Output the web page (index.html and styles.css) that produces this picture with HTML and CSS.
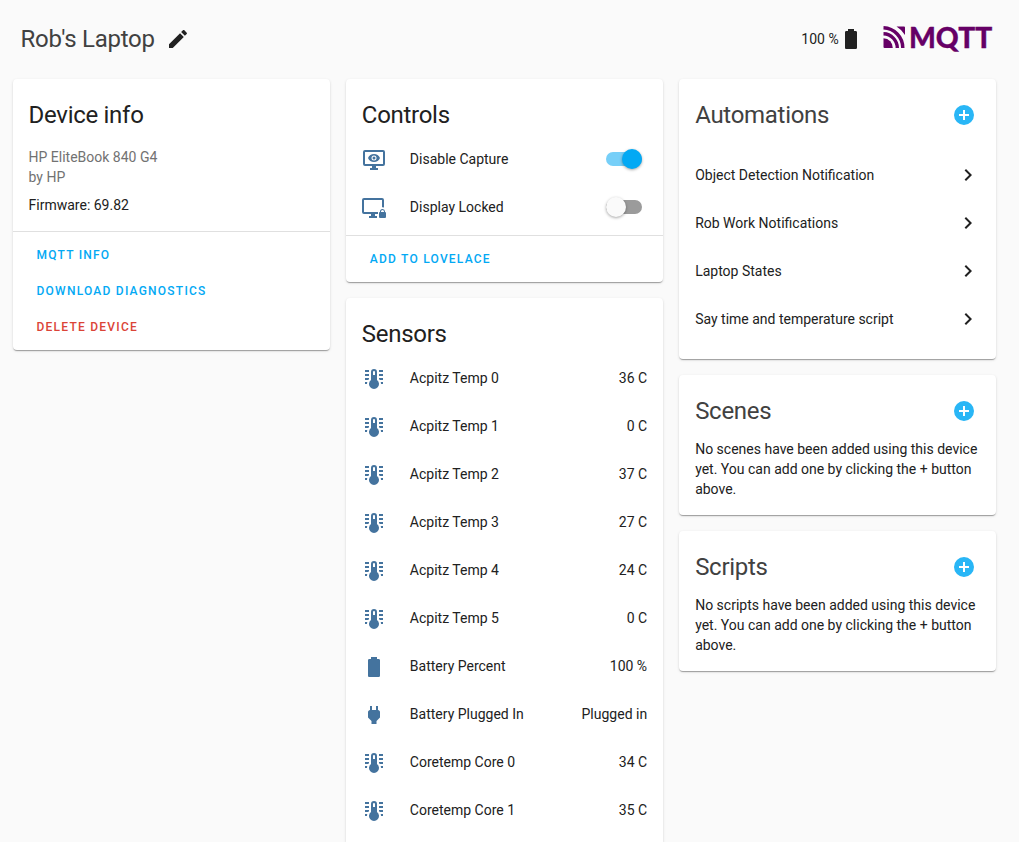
FILE: index.html
```
<!DOCTYPE html>
<html lang="en">
<head>
<meta charset="utf-8">
<title>Rob's Laptop</title>
<link rel="stylesheet" href="styles.css">
</head>
<body>
<svg class="defs" width="0" height="0">
  <symbol id="thermo" viewBox="0 0 24 24"><path d="M15 13V5A3 3 0 0 0 9 5V13A5 5 0 1 0 15 13M12 4A1 1 0 0 1 13 5V8H11V5A1 1 0 0 1 12 4ZM17 3H21V5H17ZM17 7H21V9H17ZM17 11H21V13H17.75L17 12.1ZM21 15V17H19C19 16.3 18.9 15.6 18.7 15ZM7 3V5H3V3ZM7 7V9H3V7ZM7 11V12.1L6.25 13H3V11ZM3 15V17H5C5 16.3 5.1 15.6 5.3 15Z"/></symbol>
  <symbol id="battery" viewBox="0 0 24 24"><path d="M16.67 4H15V2H9V4H7.33A1.33 1.33 0 0 0 6 5.33V20.67C6 21.4 6.6 22 7.33 22H16.67A1.33 1.33 0 0 0 18 20.67V5.33C18 4.6 17.4 4 16.67 4Z"/></symbol>
  <symbol id="plug" viewBox="0 0 24 24"><path d="M16 7V3H14V7H10V3H8V7C7 7 6 8 6 9V14.5L9.5 18V21H14.5V18L18 14.5V9C18 8 17 7 16 7Z"/></symbol>
  <symbol id="chevron" viewBox="0 0 24 24"><path d="M8.59 16.58L13.17 12L8.59 7.41L10 6L16 12L10 18Z"/></symbol>
  <symbol id="plus" viewBox="0 0 24 24"><path d="M17 13H13V17H11V13H7V11H11V7H13V11H17M12 2A10 10 0 1 0 12 22A10 10 0 0 0 12 2Z"/></symbol>
  <symbol id="monitor-eye" viewBox="0 0 24 24"><path fill-rule="evenodd" d="M3 2H21A2 2 0 0 1 23 4V16A2 2 0 0 1 21 18H14V20H16V22H8V20H10V18H3A2 2 0 0 1 1 16V4A2 2 0 0 1 3 2ZM3 4V16H21V4ZM12 6C14.7 6 17 7.6 18 10C17 12.4 14.7 14 12 14S7 12.4 6 10C7 7.6 9.300 6 12 6ZM12 7.500A2.500 2.500 0 1 0 12 12.500A2.500 2.500 0 0 0 12 7.500ZM12 8.500A1.500 1.500 0 1 1 12 11.500A1.500 1.500 0 0 1 12 8.500Z"/></symbol>
  <symbol id="monitor-lock" viewBox="0 0 24 24"><path fill-rule="evenodd" d="M2 2H20A2 2 0 0 1 22 4V11.500A4 4 0 0 0 20 11.200V4H2V16H16V18H13V20H15V22H7V20H9V18H2A2 2 0 0 1 0 16V4A2 2 0 0 1 2 2ZM18 16V15.500A2.500 2.500 0 0 1 23 15.500V16A1 1 0 0 1 24 17V21A1 1 0 0 1 23 22H18A1 1 0 0 1 17 21V17A1 1 0 0 1 18 16ZM19 16H22V15.500A1.500 1.500 0 0 0 19 15.500Z"/></symbol>
</svg>

<header class="header">
  <h1>Rob's Laptop</h1>
  <svg class="icon pencil" viewBox="0 0 24 24"><path d="M20.71 7.04C21.1 6.65 21.1 6 20.71 5.63L18.37 3.29C18 2.9 17.35 2.9 16.96 3.29L15.12 5.12L18.87 8.87M3 17.25V21H6.75L17.81 9.93L14.06 6.18L3 17.25Z"/></svg>
  <span class="charge">100 %</span>
  <svg class="icon"><use href="#battery"/></svg>
  <svg class="logo" viewBox="0 -7 116 44">
    <path d="M1.500 14.200A9.500 9.500 0 0 1 10.800 24H2.500Q1.500 24 1.500 23Z"/>
    <path class="arc" d="M1.500 9.800A14.200 14.200 0 0 1 15.300 24M1.500 3.800A20.200 20.200 0 0 1 20.800 24"/>
    <path d="M14.500 2.500H22Q23 2.500 23 3.500V11A25 25 0 0 0 14.500 2.500Z"/>
    <text x="27" y="23.700" textLength="83.300" lengthAdjust="spacingAndGlyphs">MQTT</text>
  </svg>
</header>

<main class="columns">
  <div class="column">
    <section class="card">
      <h2>Device info</h2>
      <div class="info">
        <div class="muted">HP EliteBook 840 G4</div>
        <div class="muted">by HP</div>
        <div class="firmware">Firmware: 69.82</div>
      </div>
      <div class="actions">
        <a>MQTT info</a>
        <a>Download diagnostics</a>
        <a class="danger">Delete device</a>
      </div>
    </section>
  </div>

  <div class="column">
    <section class="card">
      <h2>Controls</h2>
      <div class="entities">
        <div class="entity"><svg class="icon"><use href="#monitor-eye"/></svg><span class="name">Disable Capture</span><span class="switch on"></span></div>
        <div class="entity"><svg class="icon"><use href="#monitor-lock"/></svg><span class="name">Display Locked</span><span class="switch"></span></div>
      </div>
      <div class="actions"><a>Add to Lovelace</a></div>
    </section>
    <section class="card sensors">
      <h2>Sensors</h2>
      <div class="entities">
        <div class="entity"><svg class="icon"><use href="#thermo"/></svg><span class="name">Acpitz Temp 0</span><span>36 C</span></div>
        <div class="entity"><svg class="icon"><use href="#thermo"/></svg><span class="name">Acpitz Temp 1</span><span>0 C</span></div>
        <div class="entity"><svg class="icon"><use href="#thermo"/></svg><span class="name">Acpitz Temp 2</span><span>37 C</span></div>
        <div class="entity"><svg class="icon"><use href="#thermo"/></svg><span class="name">Acpitz Temp 3</span><span>27 C</span></div>
        <div class="entity"><svg class="icon"><use href="#thermo"/></svg><span class="name">Acpitz Temp 4</span><span>24 C</span></div>
        <div class="entity"><svg class="icon"><use href="#thermo"/></svg><span class="name">Acpitz Temp 5</span><span>0 C</span></div>
        <div class="entity"><svg class="icon"><use href="#battery"/></svg><span class="name">Battery Percent</span><span>100 %</span></div>
        <div class="entity"><svg class="icon"><use href="#plug"/></svg><span class="name">Battery Plugged In</span><span>Plugged in</span></div>
        <div class="entity"><svg class="icon"><use href="#thermo"/></svg><span class="name">Coretemp Core 0</span><span>34 C</span></div>
        <div class="entity"><svg class="icon"><use href="#thermo"/></svg><span class="name">Coretemp Core 1</span><span>35 C</span></div>
      </div>
    </section>
  </div>

  <div class="column related">
    <section class="card">
      <h2>Automations <svg class="icon add"><use href="#plus"/></svg></h2>
      <div class="links">
        <a>Object Detection Notification <svg class="icon"><use href="#chevron"/></svg></a>
        <a>Rob Work Notifications <svg class="icon"><use href="#chevron"/></svg></a>
        <a>Laptop States <svg class="icon"><use href="#chevron"/></svg></a>
        <a>Say time and temperature script <svg class="icon"><use href="#chevron"/></svg></a>
      </div>
    </section>
    <section class="card">
      <h2>Scenes <svg class="icon add"><use href="#plus"/></svg></h2>
      <p>No scenes have been added using this device yet. You can add one by clicking the + button above.</p>
    </section>
    <section class="card">
      <h2>Scripts <svg class="icon add"><use href="#plus"/></svg></h2>
      <p>No scripts have been added using this device yet. You can add one by clicking the + button above.</p>
    </section>
  </div>
</main>
</body>
</html>
```

FILE: styles.css
```
* { box-sizing: border-box; }
html, body { height: 100%; }
body {
  margin: 0;
  overflow: hidden;
  background: #fafafa;
  color: #212121;
  font: 14px/20px Roboto, sans-serif;
}
.defs { position: absolute; }
.icon { display: block; width: 24px; height: 24px; fill: currentColor; flex: none; }

.header {
  display: flex;
  align-items: center;
  height: 79px;
  padding: 0 21.3px 1px 20.6px;
}
h1, h2 { margin: 0; font-size: 24px; font-weight: 400; letter-spacing: -0.012em; }
h1 { color: #414141; line-height: 32px; }
.pencil { margin-left: 11px; }
.charge { margin-left: auto; }
.logo { width: 116px; height: 44px; margin-left: 19px; fill: #660066; }
.logo .arc { fill: none; stroke: #660066; stroke-width: 3.4; }
.logo text { font: 900 28.5px Lato, sans-serif; stroke: #660066; stroke-width: .3; }

.columns {
  display: grid;
  grid-template-columns: repeat(3, 317.3px);
  gap: 16px;
  padding-left: 12.56px;
}
.column { display: flex; flex-direction: column; gap: 16px; }
.card {
  background: #fff;
  border-radius: 4px;
  box-shadow: 0 2px 1px -1px rgba(0,0,0,.2), 0 1px 1px 0 rgba(0,0,0,.14), 0 1px 3px 0 rgba(0,0,0,.12);
}
.sensors { min-height: 548px; }
h2 { padding: 12px 16px 0; line-height: 48px; }
.info { padding: 8px 16px 16px; }
.muted { color: #727272; }
.firmware { margin-top: 8px; }
.actions {
  display: flex;
  flex-direction: column;
  align-items: flex-start;
  padding: 5px 16px;
  border-top: 1px solid #e0e0e0;
}
.actions a {
  padding: 0 8px;
  color: #03a9f4;
  font-size: 12px;
  font-weight: 500;
  line-height: 36px;
  letter-spacing: 1.23px;
  text-transform: uppercase;
}
.actions .danger { color: #db4437; }

.entities { display: flex; flex-direction: column; gap: 8px; padding: 0 16px 8px; }
.entity { display: flex; align-items: center; height: 40px; }
.entity .icon { margin-top: 2px; color: #44739e; }
.name { flex: 1; margin-left: 24px; }
.switch {
  position: relative;
  width: 36px;
  height: 14px;
  margin-right: 5px;
  border-radius: 7px;
  background: #9b9b9b;
}
.switch::after {
  content: "";
  position: absolute;
  top: -3px;
  left: 0;
  width: 20px;
  height: 20px;
  border-radius: 50%;
  background: #fafafa;
  box-shadow: 0 1px 3px rgba(0,0,0,.35);
}
.switch.on { background: #76cff8; }
.switch.on::after { left: 16px; background: #03a9f4; }

.related h2 { display: flex; align-items: center; justify-content: space-between; padding-right: 20px; color: #414141; }
.add { color: #29b6f6; }
.links { padding: 12px 16px 16px; }
.links a { display: flex; align-items: center; justify-content: space-between; height: 48px; }
p { margin: 0; padding: 4px 16px 16px; }
```
